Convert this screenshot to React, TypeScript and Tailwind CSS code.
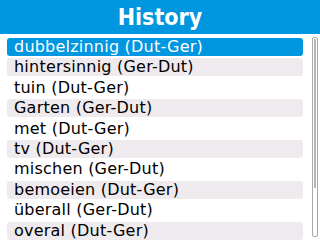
import React from "react";

const items = [
  "dubbelzinnig (Dut-Ger)",
  "hintersinnig (Ger-Dut)",
  "tuin (Dut-Ger)",
  "Garten (Ger-Dut)",
  "met (Dut-Ger)",
  "tv (Dut-Ger)",
  "mischen (Ger-Dut)",
  "bemoeien (Dut-Ger)",
  "überall (Ger-Dut)",
  "overal (Dut-Ger)",
];

export default function App() {
  return (
    <div
      className="w-[320px] h-[240px] overflow-hidden bg-white flex flex-col"
      style={{ fontFamily: '"DejaVu Sans", sans-serif' }}
    >
      <div className="h-[34px] shrink-0 bg-[#0096e0] flex items-center justify-center">
        <span
          className="text-white font-bold text-[23px] leading-none font-stretch-condensed"
          style={{ fontFamily: '"DejaVu Sans Condensed", "DejaVu Sans", sans-serif' }}
        >
          History
        </span>
      </div>
      <div className="flex flex-1 pt-[4px] min-h-0">
        <div className="flex flex-col gap-[2.4px] pl-[7px] w-[303px] shrink-0">
          {items.map((t, i) => (
            <div
              key={t}
              className={
                "h-[18px] shrink-0 rounded-[3px] pl-[7px] text-[16px] leading-[18px] tracking-[0.22px] whitespace-nowrap " +
                (i === 0
                  ? "bg-[#0096e0] text-white"
                  : i % 2 === 1
                  ? "bg-[#eeeaee] text-black"
                  : "text-black")
              }
            >
              {t}
            </div>
          ))}
        </div>
        <div className="ml-[9px] -mt-[1px] w-[6px] h-[200px] relative border border-[#a8a8a8] rounded-[2px]">
          <div className="absolute left-[1px] top-[1px] w-[2px] h-[149px] bg-[#b4b4b4]" />
        </div>
      </div>
    </div>
  );
}
